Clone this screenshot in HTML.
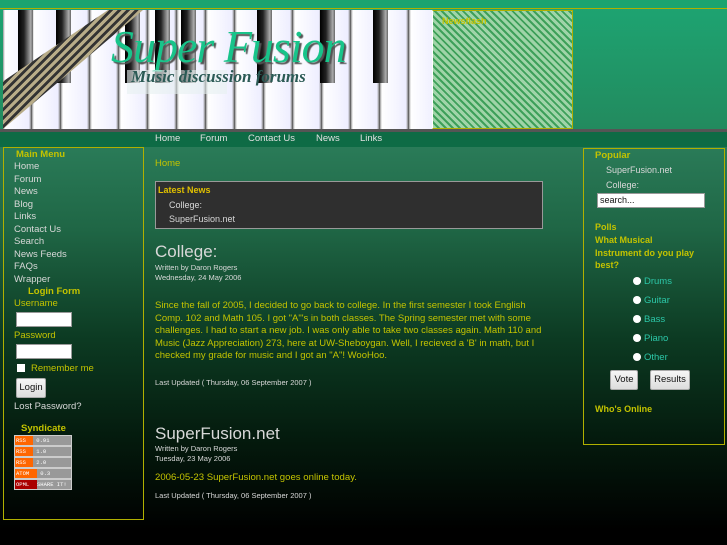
<!DOCTYPE html>
<html><head><meta charset="utf-8"><style>
*{margin:0;padding:0;box-sizing:border-box}
body{width:727px;height:545px;overflow:hidden;position:relative;font-family:"Liberation Sans",sans-serif;background:linear-gradient(#2a7b58 0px,#2a7b58 147px,#1f6645 230px,#0c3a22 340px,#041a0d 440px,#000 530px)}
.a{position:absolute}
.y{color:#c3c300}
.w{color:#d8d8d8}
.box{border:1px solid #b0b000}
#top{left:0;top:0;width:727px;height:8px;background:#1ba46f}
#hdr{left:0;top:8px;width:727px;height:122px;background:linear-gradient(#1ea371,#228a5e);border-top:1px solid #b0b000}
#piano{left:3px;top:10px;width:429px;height:119px;background:
repeating-linear-gradient(90deg,#999 0,#fff 2px,#eef 26px,#888 28px,#444 29px)}
.bk{position:absolute;top:0;height:73px;width:15px;background:linear-gradient(90deg,#000,#222 40%,#aaa 85%,#666)}
#nf{left:432px;top:10px;width:141px;height:119px;border:1px solid #b0b000;border-left-color:#fff;background:repeating-linear-gradient(45deg,#9fd4a8 0,#9fd4a8 3px,#3ea05a 3px,#3ea05a 5px),#7fc58b}
#gray{left:0;top:129px;width:727px;height:3px;background:#555}
#nav{left:0;top:132px;width:727px;height:15px;background:#0e6b45;font-size:9.5px;color:#e0e0e0}
#nav span{position:absolute;top:1px}
#lb{left:3px;top:147px;width:141px;height:373px;border:1px solid #b0b000}
#rb{left:583px;top:148px;width:142px;height:297px}
.l{position:absolute;left:11px;font-size:9.5px}
.b{font-weight:bold}
input.t{position:absolute;background:#fff;border:1px solid #999;height:15px}
.btn{position:absolute;background:linear-gradient(#f6f6f6,#ddd);border:1px solid #aaa;border-radius:2px;font-size:9.5px;color:#111;text-align:center;line-height:18px;height:20px}
.rad{position:absolute;width:8px;height:8px;border-radius:50%;background:#fff;left:633px}
.opt{position:absolute;left:644px;font-size:9.5px;color:#2cc7a8}
.syn{position:absolute;left:14px;width:58px;height:11px;background:#999;border:1px solid #ccc;font-size:5.5px;color:#fff;font-family:"Liberation Mono",monospace;line-height:9px}
.syn i{display:inline-block;width:18px;background:#f60;font-style:normal;height:9px;padding-left:1px}
</style></head><body>
<div class="a" id="top"></div>
<div class="a" id="hdr"></div>
<div class="a" id="piano">
<div class="bk" style="left:15px"></div><div class="bk" style="left:53px"></div><div class="bk" style="left:122px"></div><div class="bk" style="left:152px"></div><div class="bk" style="left:178px"></div><div class="bk" style="left:254px"></div><div class="bk" style="left:317px"></div><div class="bk" style="left:370px"></div>
<div style="position:absolute;left:0;top:0;width:140px;height:119px;background:repeating-linear-gradient(135deg,#b8ac88 0,#b8ac88 3px,#333 3px,#333 6px);clip-path:polygon(0 85%,0 60%,75% 0,100% 0,0 100%)"></div>
<div style="position:absolute;left:108px;top:10px;font-family:'Liberation Serif',serif;font-style:italic;font-size:46px;color:#18c48a;text-shadow:2px 2px 1px #555;letter-spacing:-1px">Super Fusion</div>
<div style="position:absolute;left:124px;top:60px;width:100px;height:24px;background:rgba(230,240,240,.6)"></div>
<div style="position:absolute;left:128px;top:57px;font-family:'Liberation Serif',serif;font-style:italic;font-weight:bold;font-size:17px;color:#2b5a55">Music discussion forums</div>
</div>
<div class="a" id="nf"><span class="y b" style="position:absolute;left:9px;top:5px;font-size:9px">Newsflash</span></div>
<div class="a" id="gray"></div>
<div class="a" id="nav"><span style="left:155px">Home</span><span style="left:200px">Forum</span><span style="left:248px">Contact Us</span><span style="left:316px">News</span><span style="left:360px">Links</span></div>

<div class="a" id="lb"></div>
<div class="l y b" style="left:16px;top:149px">Main Menu</div>
<div class="l w" style="left:14px;top:161px;line-height:12.5px">Home<br>Forum<br>News<br>Blog<br>Links<br>Contact Us<br>Search<br>News Feeds<br>FAQs<br>Wrapper</div>
<div class="l y b" style="left:28px;top:286px">Login Form</div>
<div class="l y" style="left:14px;top:298px">Username</div>
<input class="t" style="left:16px;top:312px;width:56px">
<div class="l y" style="left:14px;top:330px">Password</div>
<input class="t" style="left:16px;top:344px;width:56px">
<div class="a" style="left:17px;top:364px;width:8px;height:8px;background:#fff"></div>
<div class="l y" style="left:31px;top:363px">Remember me</div>
<div class="btn" style="left:16px;top:378px;width:30px">Login</div>
<div class="l w" style="left:14px;top:401px">Lost Password?</div>
<div class="l y b" style="left:21px;top:423px">Syndicate</div>
<div class="syn" style="top:435px"><i>RSS</i> 0.91</div>
<div class="syn" style="top:446px"><i>RSS</i> 1.0</div>
<div class="syn" style="top:457px"><i>RSS</i> 2.0</div>
<div class="syn" style="top:468px"><i style="width:22px">ATOM</i> 0.3</div>
<div class="syn" style="top:479px"><i style="width:22px;background:#a00">OPML</i>SHARE IT!</div>

<div class="l y" style="left:155px;top:158px">Home</div>
<div class="a" style="left:155px;top:181px;width:388px;height:48px;background:#2f2f2f;border:1px solid #999"></div>
<div class="l y b" style="left:158px;top:185px;font-size:9px;color:#e0c000">Latest News</div>
<div class="l w" style="left:169px;top:198px;font-size:9px;line-height:14px">College:<br>SuperFusion.net</div>
<div class="l w" style="left:155px;top:242px;font-size:17px">College:</div>
<div class="l w" style="left:155px;top:263px;font-size:7.5px;line-height:10px">Written by Daron Rogers<br>Wednesday, 24 May 2006</div>
<div class="l y" style="left:155px;top:300px;width:388px;font-size:9.5px;line-height:12.5px">Since the fall of 2005, I decided to go back to college. In the first semester I took English Comp. 102 and Math 105. I got "A"'s in both classes. The Spring semester met with some challenges. I had to start a new job. I was only able to take two classes again. Math 110 and Music (Jazz Appreciation) 273, here at UW-Sheboygan. Well, I recieved a 'B' in math, but I checked my grade for music and I got an "A"! WooHoo.</div>
<div class="l w" style="left:155px;top:378px;font-size:7.5px">Last Updated ( Thursday, 06 September 2007 )</div>
<div class="l w" style="left:155px;top:424px;font-size:17px">SuperFusion.net</div>
<div class="l w" style="left:155px;top:444px;font-size:7.5px;line-height:10px">Written by Daron Rogers<br>Tuesday, 23 May 2006</div>
<div class="l y" style="left:155px;top:472px;font-size:9.6px">2006-05-23 SuperFusion.net goes online today.</div>
<div class="l w" style="left:155px;top:491px;font-size:7.5px">Last Updated ( Thursday, 06 September 2007 )</div>

<div class="a box" id="rb"></div>
<div class="l y b" style="left:595px;top:150px">Popular</div>
<div class="l w" style="left:606px;top:163px;font-size:9px;line-height:14.5px">SuperFusion.net<br>College:</div>
<div class="a" style="left:597px;top:193px;width:108px;height:15px;background:#fff;border:1px solid #999;font-size:9px;color:#111;padding:1px 2px">search...</div>
<div class="l y b" style="left:595px;top:221px;font-size:9px;line-height:12.8px">Polls<br>What Musical<br>Instrument do you play<br>best?</div>
<div class="rad" style="top:277px"></div><div class="opt" style="top:276px">Drums</div>
<div class="rad" style="top:296px"></div><div class="opt" style="top:295px">Guitar</div>
<div class="rad" style="top:315px"></div><div class="opt" style="top:314px">Bass</div>
<div class="rad" style="top:334px"></div><div class="opt" style="top:333px">Piano</div>
<div class="rad" style="top:353px"></div><div class="opt" style="top:352px">Other</div>
<div class="btn" style="left:610px;top:370px;width:28px">Vote</div>
<div class="btn" style="left:650px;top:370px;width:40px">Results</div>
<div class="l y b" style="left:595px;top:404px;font-size:9px">Who's Online</div>
</body></html>
